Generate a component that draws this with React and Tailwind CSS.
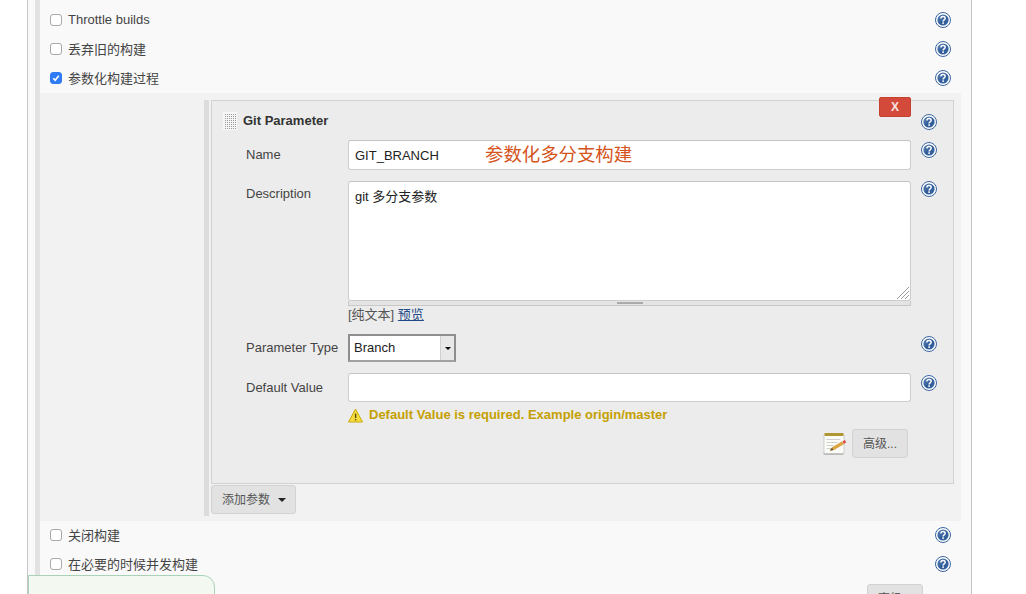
import React from "react";

const FONT = '"Liberation Sans", "Noto Sans CJK SC", sans-serif';

function Help({ className = "" }) {
  return (
    <svg width="16" height="16" viewBox="0 0 16 16" className={`shrink-0 ${className}`}>
      <defs>
        <linearGradient id="hg" x1="0" y1="0" x2="1" y2="1">
          <stop offset="0" stopColor="#5f86b8" />
          <stop offset="0.55" stopColor="#2f5b99" />
          <stop offset="1" stopColor="#3c6aa8" />
        </linearGradient>
      </defs>
      <circle cx="8" cy="8" r="7.5" fill="#ffffff" stroke="#3a66a3" strokeWidth="1" />
      <circle cx="8" cy="8" r="5.6" fill="url(#hg)" />
      <path d="M5.9 6.4c0-1.3 1-2 2.2-2s2.1.8 2.1 1.9c0 1.5-2.1 1.6-2.1 3.1" fill="none" stroke="#fff" strokeWidth="1.5" />
      <rect x="7.3" y="10.3" width="1.6" height="1.6" fill="#fff" />
    </svg>
  );
}

function Check({ label, checked, latin }) {
  return (
    <label className="flex h-[29px] items-center pl-[10px]">
      <span className="relative -mt-[1px] flex h-[12px] w-[12px]">
        <input
          type="checkbox"
          defaultChecked={checked}
          className="m-0 h-[12px] w-[12px] appearance-none rounded-[3px] border border-[#a8a8a8] bg-white checked:border-[#2f7bf6] checked:bg-[#2f7bf6]"
        />
        {checked && (
          <svg viewBox="0 0 12 12" className="absolute left-0 top-0 h-[12px] w-[12px]">
            <path d="M3.2 6.3l2 2 3.6-4.6" fill="none" stroke="#fff" strokeWidth="1.6" />
          </svg>
        )}
      </span>
      <span className={`ml-[6px] text-[13px] leading-[18px] text-[#444] ${latin ? "-mt-[1px]" : ""}`}>{label}</span>
      <Help className="-mt-[1px] ml-auto mr-[20px]" />
    </label>
  );
}

function Grip() {
  return (
    <svg width="14" height="18" viewBox="0 0 14 18" className="shrink-0">
      <rect width="14" height="18" fill="#f6f6f6" />
      <pattern id="dots" width="2" height="2" patternUnits="userSpaceOnUse">
        <rect width="1" height="1" fill="#9a9a9a" />
      </pattern>
      <rect x="1" y="1" width="12" height="16" fill="url(#dots)" />
    </svg>
  );
}

function Notepad() {
  return (
    <svg width="24" height="24" viewBox="0 0 24 24" className="shrink-0">
      <rect x="0.5" y="20.5" width="20" height="2.5" rx="1" fill="#bcbcbc" />
      <rect x="1" y="3" width="20" height="18.5" fill="#fbfbf8" stroke="#b4b4b4" strokeWidth="0.6" />
      <rect x="1.5" y="1" width="19" height="3" fill="#c2a53c" />
      <path d="M3 1v3M5 1v3M7 1v3M9 1v3M11 1v3M13 1v3M15 1v3M17 1v3M19 1v3" stroke="#8a7424" strokeWidth="0.6" />
      <path d="M3.5 7.5h14M3.5 10.5h11M3.5 13.5h7M3.5 16.5h5" stroke="#cfcfcf" strokeWidth="1" />
      <path d="M7 18.5l2-2.8 10-6 1.6 2.4-10.2 5.8z" fill="#e2a73a" stroke="#a37a24" strokeWidth="0.4" />
      <path d="M19.6 9.2l2.2-1.2 1.4 2.4-2.2 1.3z" fill="#e0483c" />
      <path d="M7 18.5l2-2.8 1.4 2.4z" fill="#6a5436" />
    </svg>
  );
}

function Warning() {
  return (
    <svg width="15" height="15" viewBox="0 0 15 15" className="shrink-0">
      <path d="M7.5 1L14.5 14H.5z" fill="#f6dc3c" stroke="#c9a80f" strokeWidth="1" strokeLinejoin="round" />
      <rect x="6.9" y="5.6" width="1.4" height="4.4" fill="#5a4a00" />
      <rect x="6.9" y="11" width="1.4" height="1.4" fill="#5a4a00" />
    </svg>
  );
}

const inputCls =
  "block w-full rounded-[3px] border border-[#cdcdcd] border-t-[#c4c4c4] bg-white px-[6px] text-[13px] text-[#222] outline-none";
const btnCls =
  "rounded-[3px] border border-[#d2d2d2] bg-[#e2e2e2] text-[12px] text-[#555]";
const labelCls = "w-[102px] shrink-0 text-[13px] text-[#444]";

export default function App() {
  return (
    <div
      className="relative h-[594px] w-[1026px] overflow-hidden bg-white pl-[27px]"
      style={{ fontFamily: FONT }}
    >
      <div className="h-full w-[945px] border-x border-[#c6c6c6] bg-[#f9f9f9] pl-[7px]">
        <div className="flex h-[579px] flex-col border-l-[5px] border-[#e2e2e2] pt-[6px]">
          <Check label="Throttle builds" latin />
          <Check label="丢弃旧的构建" />
          <Check label="参数化构建过程" checked />

          {/* nested block */}
          <div className="h-[428px] w-[921px] bg-[#f2f2f2] pl-[164px] pt-[7px]">
            <div className="h-[416px] border-l-[5px] border-[#dcdcdc] pl-[2px]">
              <div className="relative h-[384px] w-[743px] border border-[#d2d2d2] bg-[#ececec]">
                <button className="absolute left-[667px] top-[-4px] h-[20px] w-[32px] rounded-[2px] border border-[#c5402f] bg-[#d44a3a] text-[12px] font-bold text-[#f6e4e0]">
                  X
                </button>

                {/* title */}
                <div className="flex h-[39px]">
                  <div className="ml-[11px] mt-[11px]">
                    <Grip />
                  </div>
                  <div className="ml-[6px] mt-[11px] w-[678px] text-[13px] font-bold leading-[18px] text-[#333]">
                    Git Parameter
                  </div>
                  <Help className="mt-[13px]" />
                </div>

                <div className="pl-[34px]">
                  {/* name */}
                  <div className="flex h-[30px]">
                    <div className={`${labelCls} leading-[30px]`}>Name</div>
                    <div className="relative w-[563px]">
                      <input className={`${inputCls} h-[30px]`} defaultValue="GIT_BRANCH" />
                      <span className="absolute left-[137px] top-[3px] text-[18.4px] leading-[24px] text-[#d4541c]">
                        参数化多分支构建
                      </span>
                    </div>
                    <Help className="ml-[10px] mt-[2px]" />
                  </div>

                  {/* description */}
                  <div className="mt-[11px] flex">
                    <div className={`${labelCls} leading-[26px]`}>Description</div>
                    <div className="w-[563px]">
                      <div className="relative">
                        <textarea
                          className={`${inputCls} h-[120px] resize-none py-[6px] leading-[18px]`}
                          defaultValue="git 多分支参数"
                        />
                        <svg width="14" height="14" viewBox="0 0 14 14" className="absolute bottom-[1px] right-[1px]">
                          <path d="M1 13L13 1M5 13L13 5M9 13L13 9" stroke="#9a9a9a" strokeWidth="1" fill="none" />
                        </svg>
                      </div>
                      <div className="flex h-[5px] justify-center border border-t-0 border-[#c8c8c8] bg-[#e4e4e4]">
                        <div className="mt-[1px] h-[2px] w-[26px] border-y border-[#aaa]" />
                      </div>
                      <div className="h-[16px] text-[13px] leading-[18px] text-[#555]">
                        [纯文本] <a className="text-[#204a87] underline">预览</a>
                      </div>
                    </div>
                    <Help className="ml-[10px]" />
                  </div>

                  {/* parameter type */}
                  <div className="mt-[12px] flex h-[28px]">
                    <div className={`${labelCls} leading-[27px]`}>Parameter Type</div>
                    <div className="w-[563px]">
                      <div className="flex h-[28px] w-[108px] border-[2px] border-[#8e8e8e] border-b-[#a0a0a0] bg-white">
                        <span className="flex-1 pl-[4px] text-[13px] leading-[24px] text-[#222]">Branch</span>
                        <span className="flex w-[14px] items-center justify-center border-l border-[#d0d0d0] bg-[#e8e8e8]">
                          <span className="h-0 w-0 border-x-[3px] border-t-[3px] border-x-transparent border-t-black" />
                        </span>
                      </div>
                    </div>
                    <Help className="ml-[10px] mt-[2px]" />
                  </div>

                  {/* default value */}
                  <div className="mt-[11px] flex h-[29px]">
                    <div className={`${labelCls} leading-[29px]`}>Default Value</div>
                    <div className="w-[563px]">
                      <input className={`${inputCls} h-[29px]`} />
                    </div>
                    <Help className="ml-[10px] mt-[2px]" />
                  </div>

                  {/* warning */}
                  <div className="ml-[102px] mt-[4px] flex h-[18px] items-center gap-[6px]">
                    <Warning />
                    <span className="text-[13px] font-bold text-[#c4a000]">
                      Default Value is required. Example origin/master
                    </span>
                  </div>

                  {/* advanced */}
                  <div className="mt-[5px] flex w-[662px] items-center justify-end gap-[5px]">
                    <Notepad />
                    <button className={`${btnCls} h-[29px] w-[56px]`}>高级...</button>
                  </div>
                </div>
              </div>

              <button className={`${btnCls} mt-[1px] flex h-[29px] w-[85px] items-center pl-[10px]`}>
                添加参数
                <span className="ml-[8px] h-0 w-0 border-x-[4px] border-t-[4px] border-x-transparent border-t-[#222]" />
              </button>
            </div>
          </div>

          <Check label="关闭构建" />
          <Check label="在必要的时候并发构建" />
        </div>

        <div className="mt-[5px] flex w-[888px] justify-end">
          <button className={`${btnCls} h-[29px] w-[56px]`}>高级...</button>
        </div>
      </div>

      {/* bottom sticky bar */}
      <div className="absolute left-[28px] top-[575px] h-[40px] w-[187px] rounded-tr-[12px] border border-[#a9d3b9] bg-[#f3f8f0]" />
    </div>
  );
}
